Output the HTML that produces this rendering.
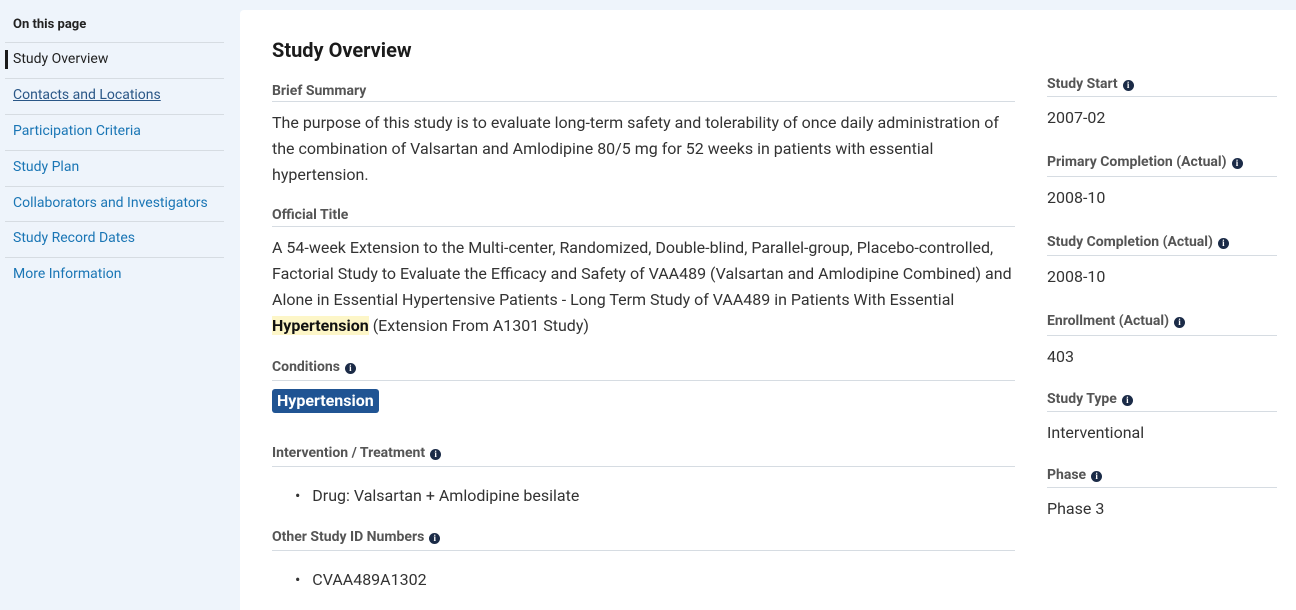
<!DOCTYPE html>
<html><head><meta charset="utf-8"><style>
body{margin:0;width:1296px;height:597px;background:#eef4fb;font-family:"Roboto","Liberation Sans",sans-serif;position:relative;overflow:hidden;color:#212121}
.a{position:absolute;white-space:nowrap}
.nav{left:13px;font-size:14px;color:#1a76b5}
.ln{position:absolute;height:1px;background:#d6dce2}
.panel{position:absolute;left:240px;top:10px;width:1056px;height:600px;background:#fff;border-radius:4px 0 0 0}
.lbl{font-size:14px;font-weight:bold;color:#555}
.txt{font-size:16px;color:#333}
.i{display:inline-block;width:11px;height:11px;border-radius:50%;background:#1b2b47;color:#fff;font-size:9px;line-height:11px;text-align:center;font-weight:bold;vertical-align:0px;margin-left:5px;font-family:"Liberation Serif",serif}
.rl{left:1047px}
.val{font-size:16px;color:#333}
</style></head><body>
<div class="a" style="left:13px;top:17px;font-size:13px;font-weight:bold;color:#222">On this page</div>
<div class="ln" style="left:5px;top:42px;width:219px"></div>
<div style="position:absolute;left:5px;top:50px;width:3px;height:19px;background:#1b1b1b"></div>
<div class="a nav" style="top:51px;color:#222">Study Overview</div>
<div class="ln" style="left:5px;top:78px;width:219px"></div>
<div class="a nav" style="top:87px;color:#2a5787;text-decoration:underline">Contacts and Locations</div>
<div class="ln" style="left:5px;top:114px;width:219px"></div>
<div class="a nav" style="top:123px">Participation Criteria</div>
<div class="ln" style="left:5px;top:150px;width:219px"></div>
<div class="a nav" style="top:159px">Study Plan</div>
<div class="ln" style="left:5px;top:186px;width:219px"></div>
<div class="a nav" style="top:195px">Collaborators and Investigators</div>
<div class="ln" style="left:5px;top:221px;width:219px"></div>
<div class="a nav" style="top:230px">Study Record Dates</div>
<div class="ln" style="left:5px;top:257px;width:219px"></div>
<div class="a nav" style="top:266px">More Information</div>

<div class="panel"></div>
<div class="a" style="left:272px;top:38px;font-size:20px;font-weight:bold;color:#1b1b1b">Study Overview</div>

<div class="a lbl" style="left:272px;top:83px">Brief Summary</div>
<div class="ln" style="left:272px;top:101px;width:743px"></div>
<div class="a txt" style="left:272px;top:113px">The purpose of this study is to evaluate long-term safety and tolerability of once daily administration of</div>
<div class="a txt" style="left:272px;top:139px">the combination of Valsartan and Amlodipine 80/5 mg for 52 weeks in patients with essential</div>
<div class="a txt" style="left:272px;top:165px">hypertension.</div>

<div class="a lbl" style="left:272px;top:207px">Official Title</div>
<div class="ln" style="left:272px;top:226px;width:743px"></div>
<div class="a txt" style="left:272px;top:238px">A 54-week Extension to the Multi-center, Randomized, Double-blind, Parallel-group, Placebo-controlled,</div>
<div class="a txt" style="left:272px;top:264px">Factorial Study to Evaluate the Efficacy and Safety of VAA489 (Valsartan and Amlodipine Combined) and</div>
<div class="a txt" style="left:272px;top:290px">Alone in Essential Hypertensive Patients - Long Term Study of VAA489 in Patients With Essential</div>
<div class="a txt" style="left:272px;top:316px"><b style="background:#fdf6c8;color:#111">Hypertension</b> (Extension From A1301 Study)</div>

<div class="a lbl" style="left:272px;top:359px">Conditions<span class="i">i</span></div>
<div class="ln" style="left:272px;top:380px;width:743px"></div>
<div class="a" style="left:272px;top:389px;height:24px;padding:0 5px;background:#205493;border-radius:3px;color:#fff;font-weight:bold;font-size:16px;line-height:24px">Hypertension</div>

<div class="a lbl" style="left:272px;top:445px">Intervention / Treatment<span class="i">i</span></div>
<div class="ln" style="left:272px;top:466px;width:743px"></div>
<div class="a txt" style="left:295px;top:486px">•&nbsp;&nbsp;&nbsp;Drug: Valsartan + Amlodipine besilate</div>

<div class="a lbl" style="left:272px;top:529px">Other Study ID Numbers<span class="i">i</span></div>
<div class="ln" style="left:272px;top:550px;width:743px"></div>
<div class="a txt" style="left:295px;top:570px">•&nbsp;&nbsp;&nbsp;CVAA489A1302</div>

<div class="a lbl rl" style="top:76px">Study Start<span class="i">i</span></div>
<div class="ln" style="left:1047px;top:96px;width:230px"></div>
<div class="a val rl" style="top:108px">2007-02</div>
<div class="a lbl rl" style="top:154px">Primary Completion (Actual)<span class="i">i</span></div>
<div class="ln" style="left:1047px;top:176px;width:230px"></div>
<div class="a val rl" style="top:188px">2008-10</div>
<div class="a lbl rl" style="top:234px">Study Completion (Actual)<span class="i">i</span></div>
<div class="ln" style="left:1047px;top:255px;width:230px"></div>
<div class="a val rl" style="top:267px">2008-10</div>
<div class="a lbl rl" style="top:313px">Enrollment (Actual)<span class="i">i</span></div>
<div class="ln" style="left:1047px;top:335px;width:230px"></div>
<div class="a val rl" style="top:347px">403</div>
<div class="a lbl rl" style="top:391px">Study Type<span class="i">i</span></div>
<div class="ln" style="left:1047px;top:411px;width:230px"></div>
<div class="a val rl" style="top:423px">Interventional</div>
<div class="a lbl rl" style="top:467px">Phase<span class="i">i</span></div>
<div class="ln" style="left:1047px;top:487px;width:230px"></div>
<div class="a val rl" style="top:499px">Phase 3</div>
</body></html>
